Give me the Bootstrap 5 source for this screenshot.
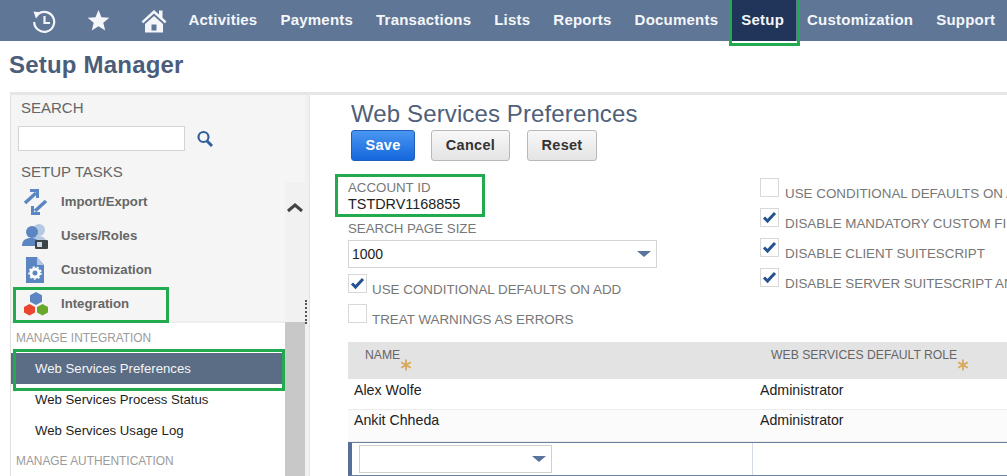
<!DOCTYPE html>
<html lang="en">
<head>
<meta charset="utf-8">
<title>Setup Manager</title>
<link rel="stylesheet" href="https://cdn.jsdelivr.net/npm/bootstrap@5.3.0/dist/css/bootstrap.min.css">
<style>
html,body{height:476px;overflow:hidden;background:#fff}
body{font-family:"Liberation Sans",Arial,sans-serif;position:relative;width:1007px}
.ns-bar{height:41px;background:#5f7697;padding-left:32px}
.ns-ico{width:24px;height:24px;display:block;flex:none}
.ns-ico2{margin-left:31px;width:23px;height:23px}
.ns-ico3{margin-left:31px;width:26px;height:26px}
.ns-links{margin-left:10px}
.ns-link{font-size:15px;font-weight:700;color:#f4f6f9;letter-spacing:.22px;text-decoration:none;height:41px;line-height:40px;padding:0 11.5px;white-space:nowrap}
.ns-link.ns-on{background:#21355a}
.ns-title{font-size:24px;font-weight:700;color:#4b5d7b;margin:0;padding:10px 0 0 9px;line-height:28px;height:51px;letter-spacing:.2px}
.ns-body{height:384px;border-top:3px solid #e6e6e6;margin-left:10px;overflow:hidden}
.ns-side{width:295px;flex:none;background:#f5f5f5;border-left:1px solid #e0e0e0;position:relative}
.ns-rail{width:5px;flex:none;background:#f1f1f1;border-right:1px solid #e4e4e4;position:relative}
.ns-sec{font-size:15px;color:#666;line-height:18px}
.ns-search{width:167px;height:25px;border:1px solid #d4d4d4;background:#fff}
.ns-task{height:34px;color:#666;font-size:13.2px;font-weight:700;padding-left:10px}
.ns-task svg{width:28px;height:28px;flex:none;margin-right:12px}
.ns-scroll{width:20px;flex:none;background:#f1f1f1}
.ns-thumb{background:#c8c8c8;height:157px}
.ns-tasks{width:275px;padding-top:3px}
.ns-list{background:#fff;border-top:2px solid #eee;height:200px}
.ns-group{font-size:11.9px;color:#9b9b9b;padding-left:5px;line-height:14px}
.ns-item{font-size:13.2px;color:#1e1e1e;line-height:31px;height:31px;padding-left:24px}
.ns-item.ns-sel{background:#5b6c85;color:#f5f5f5;height:31px;line-height:32px}
.ns-main{flex:1;padding:0 0 0 38px;overflow:hidden;min-width:0}
.ns-h2{font-size:24px;font-weight:400;color:#4f6079;margin:0 0 0 3px;line-height:29px;padding-top:4px;letter-spacing:.12px}
.ns-btn{height:31px;font-size:14.5px;font-weight:700;border-radius:3px;border:1px solid #b9b9b9;background:linear-gradient(#f8f8f8,#e4e4e4);color:#333;padding:1px 0 0;letter-spacing:.3px}
.ns-btn:hover{color:#333}
.ns-save{width:64px;background:linear-gradient(#4a96f2,#1567dc);border-color:#1f5fb8;color:#fff}
.ns-save:hover{color:#fff}
.ns-cancel{width:79px}
.ns-reset{width:70px;margin-left:1px}
.ns-btns{margin-left:3px;gap:16px;margin-top:1.5px}
.ns-fields{width:659px;height:167px;margin-top:14.5px}
.ns-left{width:412px;flex:none}
.ns-right{flex:1;white-space:nowrap;overflow:hidden;padding-top:4px}
.ns-lab{font-size:13.3px;color:#777;line-height:14px}
.ns-val{font-size:14.4px;color:#222;line-height:17px;margin-top:1px}
.ns-select{width:309px;height:28px;border:1px solid #d5d5d5;font-size:14px;color:#222;padding:0 5px 0 3px;margin-top:4px}
.ns-caret{width:0;height:0;border-left:7px solid transparent;border-right:7px solid transparent;border-top:6px solid #58749c;display:block}
.ns-chk{height:30px;font-size:13.4px;color:#777;white-space:nowrap;gap:6px}
.ns-left .ns-chk{gap:5px}
.ns-box{width:19px;height:19px;border:1px solid #d8d8d8;background:#fff;flex:none;margin-top:-14px}
.ns-box svg{display:block;width:17px;height:17px}
.ns-head{height:37px;width:659px;background:#e3e3e3;font-size:12.2px;color:#666;padding-top:6px;line-height:14px}
.ns-c1{width:406px;flex:none;padding-left:17px}
.ns-c2{flex:1;padding-left:17px}
.ns-star{width:12px;height:12px;flex:none;margin-top:11px}
.ns-row{height:31px;width:659px;font-size:14.2px;color:#222;border-bottom:1px solid #ececec}
.ns-row .ns-c1,.ns-row .ns-c2{padding-left:6px;padding-top:3px;line-height:17px}
.ns-row2{height:32px;background:#fbfbfb}
.ns-row2 .ns-c1,.ns-row2 .ns-c2{padding-top:2px}
.ns-edit{height:34px;width:659px;border-top:1px solid #6c7f9f;border-bottom:1px solid #6c7f9f;border-left:4px solid #566f98}
.ns-e1{width:401px;flex:none;padding:2px 0 0 7px;border-right:1px solid #d5dbe6}
.ns-combo{width:193px;height:28px;border:1px solid #d0d0d0;padding-right:5px}
.ns-mark{position:absolute;border:3px solid #22aa4f;pointer-events:none}
.ns-m1{left:729px;top:-3px;width:71px;height:49px}
.ns-m2{left:13px;top:287px;width:156px;height:36px}
.ns-m3{left:13px;top:349px;width:272px;height:42px}
.ns-m4{left:335px;top:174px;width:150px;height:43px}
.ns-grip{position:absolute;left:0;top:205px;width:2px;height:24px;border-left:2px dotted #555}
</style>
</head>
<body>
<nav class="ns-bar d-flex align-items-center">
  <svg class="ns-ico" viewBox="0 0 24 24" fill="none" stroke="#f4f6f9" stroke-width="2.200"><path d="M6 5A10 10 0 1 1 2.200 13"/><path d="M1.500 2.500l7.500 1-5 6z" fill="#f4f6f9" stroke="none"/><path d="M12.500 7v7h5.500"/></svg>
  <svg class="ns-ico ns-ico2" viewBox="0 0 24 24" fill="#f4f6f9"><path d="M12 1l3.100 7.600 8.200.6-6.300 5.200 2 8-7-4.400-7 4.400 2-8L.7 9.200l8.200-.6z"/></svg>
  <svg class="ns-ico ns-ico3" viewBox="0 0 26 26" fill="#f4f6f9"><path d="M13 2L.5 13.500l1.700 1.800L13 5.500l10.800 9.800 1.700-1.800-4-3.700V2.500h-3.500v4z"/><path d="M13 8L4 16v8.500h18V16zM10.500 16.500h5v6h-5z" fill-rule="evenodd"/></svg>
  <div class="ns-links d-flex">
    <a class="ns-link" href="#">Activities</a>
    <a class="ns-link" href="#">Payments</a>
    <a class="ns-link" href="#">Transactions</a>
    <a class="ns-link" href="#">Lists</a>
    <a class="ns-link" href="#">Reports</a>
    <a class="ns-link" href="#">Documents</a>
    <a class="ns-link ns-on" href="#">Setup</a>
    <a class="ns-link" href="#">Customization</a>
    <a class="ns-link" href="#">Support</a>
  </div>
</nav>
<h1 class="ns-title">Setup Manager</h1>
<div class="ns-body d-flex">
  <aside class="ns-side">
    <div class="ns-sec" style="padding:4px 0 0 10px">SEARCH</div>
    <div class="d-flex align-items-center" style="padding:9px 0 0 7px">
      <div class="ns-search"></div>
      <svg width="18" height="18" viewBox="0 0 18 18" fill="none" style="margin-left:11px"><circle cx="7.500" cy="7" r="5" stroke="#2f5f9e" stroke-width="2.200"/><path d="M11 11l5 5" stroke="#2f5f9e" stroke-width="3"/></svg>
    </div>
    <div class="ns-sec" style="padding:12px 0 0 10px">SETUP TASKS</div>
    <div class="d-flex" style="margin-top:1px">
      <div class="ns-tasks">
        <div class="ns-task d-flex align-items-center">
          <svg viewBox="0 0 28 28" fill="none" stroke="#5b86c2" stroke-width="3.500"><path d="M4 15L15 5"/><path d="M9 2.500h7.500V10" stroke-width="3"/><path d="M25 13L14 23"/><path d="M19 25.500h-7.500V18" stroke-width="3"/></svg>Import/Export
        </div>
        <div class="ns-task d-flex align-items-center">
          <svg viewBox="0 0 28 28"><circle cx="18" cy="8" r="6" fill="#b5c8e2"/><path d="M10 22c0-6 4-8 8-8s8 3 8 8z" fill="#b5c8e2"/><circle cx="11" cy="10" r="6" fill="#5b86c2"/><path d="M1 24c0-6 4-8 9-8s8 2 8 8z" fill="#5b86c2"/><rect x="14" y="18" width="13" height="9" rx="1" fill="#3c4348"/><rect x="16" y="20" width="5" height="5" fill="#cdd6df"/></svg>Users/Roles
        </div>
        <div class="ns-task d-flex align-items-center">
          <svg viewBox="0 0 28 28"><path d="M5 1h11l7 8v18H5z" fill="#5b86c2"/><path d="M16 1l7 8h-7z" fill="#b5c8e2"/><circle cx="14" cy="17" r="4" fill="none" stroke="#fff" stroke-width="3"/><circle cx="14" cy="17" r="6" fill="none" stroke="#fff" stroke-width="1.500" stroke-dasharray="2 2.200"/></svg>Customization
        </div>
        <div class="ns-task d-flex align-items-center">
          <svg viewBox="0 0 28 28"><path d="M15 2l6 3.200v6.600L15 15l-6-3.200V5.200z" fill="#5b86c2"/><path d="M8.500 14l5.500 3v5.600L8.500 25.500 3 22.600V17z" fill="#e8462e"/><path d="M21.500 14l5.500 3v5.600l-5.500 2.900-5.500-2.900V17z" fill="#6aa82c"/></svg>Integration
        </div>
        <div class="ns-list">
          <div class="ns-group" style="padding-top:8px;height:30px">MANAGE INTEGRATION</div>
          <div class="ns-item ns-sel">Web Services Preferences</div>
          <div class="ns-item">Web Services Process Status</div>
          <div class="ns-item">Web Services Usage Log</div>
          <div class="ns-group" style="padding-top:8px">MANAGE AUTHENTICATION</div>
        </div>
      </div>
      <div class="ns-scroll">
        <svg width="20" height="44" viewBox="0 0 20 44" class="d-block"><path d="M3 29l7-6 7 6" fill="none" stroke="#444" stroke-width="3"/></svg>
        <div class="ns-thumb" style="margin-top:96px"></div>
      </div>
    </div>
  </aside>
  <div class="ns-rail"><span class="ns-grip"></span></div>
  <main class="ns-main">
    <h2 class="ns-h2">Web Services Preferences</h2>
    <div class="ns-btns d-flex">
      <button class="btn ns-btn ns-save">Save</button>
      <button class="btn ns-btn ns-cancel">Cancel</button>
      <button class="btn ns-btn ns-reset">Reset</button>
    </div>
    <div class="ns-fields d-flex">
      <div class="ns-left">
        <div class="ns-lab" style="margin-top:6px">ACCOUNT ID</div>
        <div class="ns-val">TSTDRV1168855</div>
        <div class="ns-lab" style="margin-top:9px">SEARCH PAGE SIZE</div>
        <div class="ns-select d-flex align-items-center justify-content-between"><span>1000</span><i class="ns-caret"></i></div>
        <div class="ns-chk d-flex align-items-center" style="margin-top:7px">
          <span class="ns-box"><svg viewBox="0 0 17 17"><path d="M3 8.500l3.500 3.500L14 4" fill="none" stroke="#25538f" stroke-width="3"/></svg></span>USE CONDITIONAL DEFAULTS ON ADD</div>
        <div class="ns-chk d-flex align-items-center">
          <span class="ns-box"></span>TREAT WARNINGS AS ERRORS</div>
      </div>
      <div class="ns-right">
        <div class="ns-chk d-flex align-items-center"><span class="ns-box"></span>USE CONDITIONAL DEFAULTS ON ADD</div>
        <div class="ns-chk d-flex align-items-center"><span class="ns-box"><svg viewBox="0 0 17 17"><path d="M3 8.500l3.500 3.500L14 4" fill="none" stroke="#25538f" stroke-width="3"/></svg></span>DISABLE MANDATORY CUSTOM FIELD VALIDATION</div>
        <div class="ns-chk d-flex align-items-center"><span class="ns-box"><svg viewBox="0 0 17 17"><path d="M3 8.500l3.500 3.500L14 4" fill="none" stroke="#25538f" stroke-width="3"/></svg></span>DISABLE CLIENT SUITESCRIPT</div>
        <div class="ns-chk d-flex align-items-center"><span class="ns-box"><svg viewBox="0 0 17 17"><path d="M3 8.500l3.500 3.500L14 4" fill="none" stroke="#25538f" stroke-width="3"/></svg></span>DISABLE SERVER SUITESCRIPT AND WORKFLOW</div>
      </div>
    </div>
    <div class="ns-head d-flex">
      <div class="ns-c1 d-flex">NAME<svg class="ns-star" viewBox="0 0 12 12" fill="none" stroke="#d9a85a" stroke-width="1.800"><path d="M6 .5v11M1.200 3.200l9.600 5.600M10.800 3.200L1.200 8.800"/></svg></div>
      <div class="ns-c2 d-flex">WEB SERVICES DEFAULT ROLE<svg class="ns-star" viewBox="0 0 12 12" fill="none" stroke="#d9a85a" stroke-width="1.800"><path d="M6 .5v11M1.200 3.200l9.600 5.600M10.800 3.200L1.200 8.800"/></svg></div>
    </div>
    <div class="ns-row d-flex"><div class="ns-c1">Alex Wolfe</div><div class="ns-c2">Administrator</div></div>
    <div class="ns-row ns-row2 d-flex"><div class="ns-c1">Ankit Chheda</div><div class="ns-c2">Administrator</div></div>
    <div class="ns-edit d-flex">
      <div class="ns-e1"><div class="ns-combo d-flex align-items-center justify-content-end"><i class="ns-caret"></i></div></div>
    </div>
  </main>
</div>
<span class="ns-mark ns-m1"></span>
<span class="ns-mark ns-m2"></span>
<span class="ns-mark ns-m3"></span>
<span class="ns-mark ns-m4"></span>
<script src="https://cdn.jsdelivr.net/npm/bootstrap@5.3.0/dist/js/bootstrap.bundle.min.js"></script>
</body>
</html>
